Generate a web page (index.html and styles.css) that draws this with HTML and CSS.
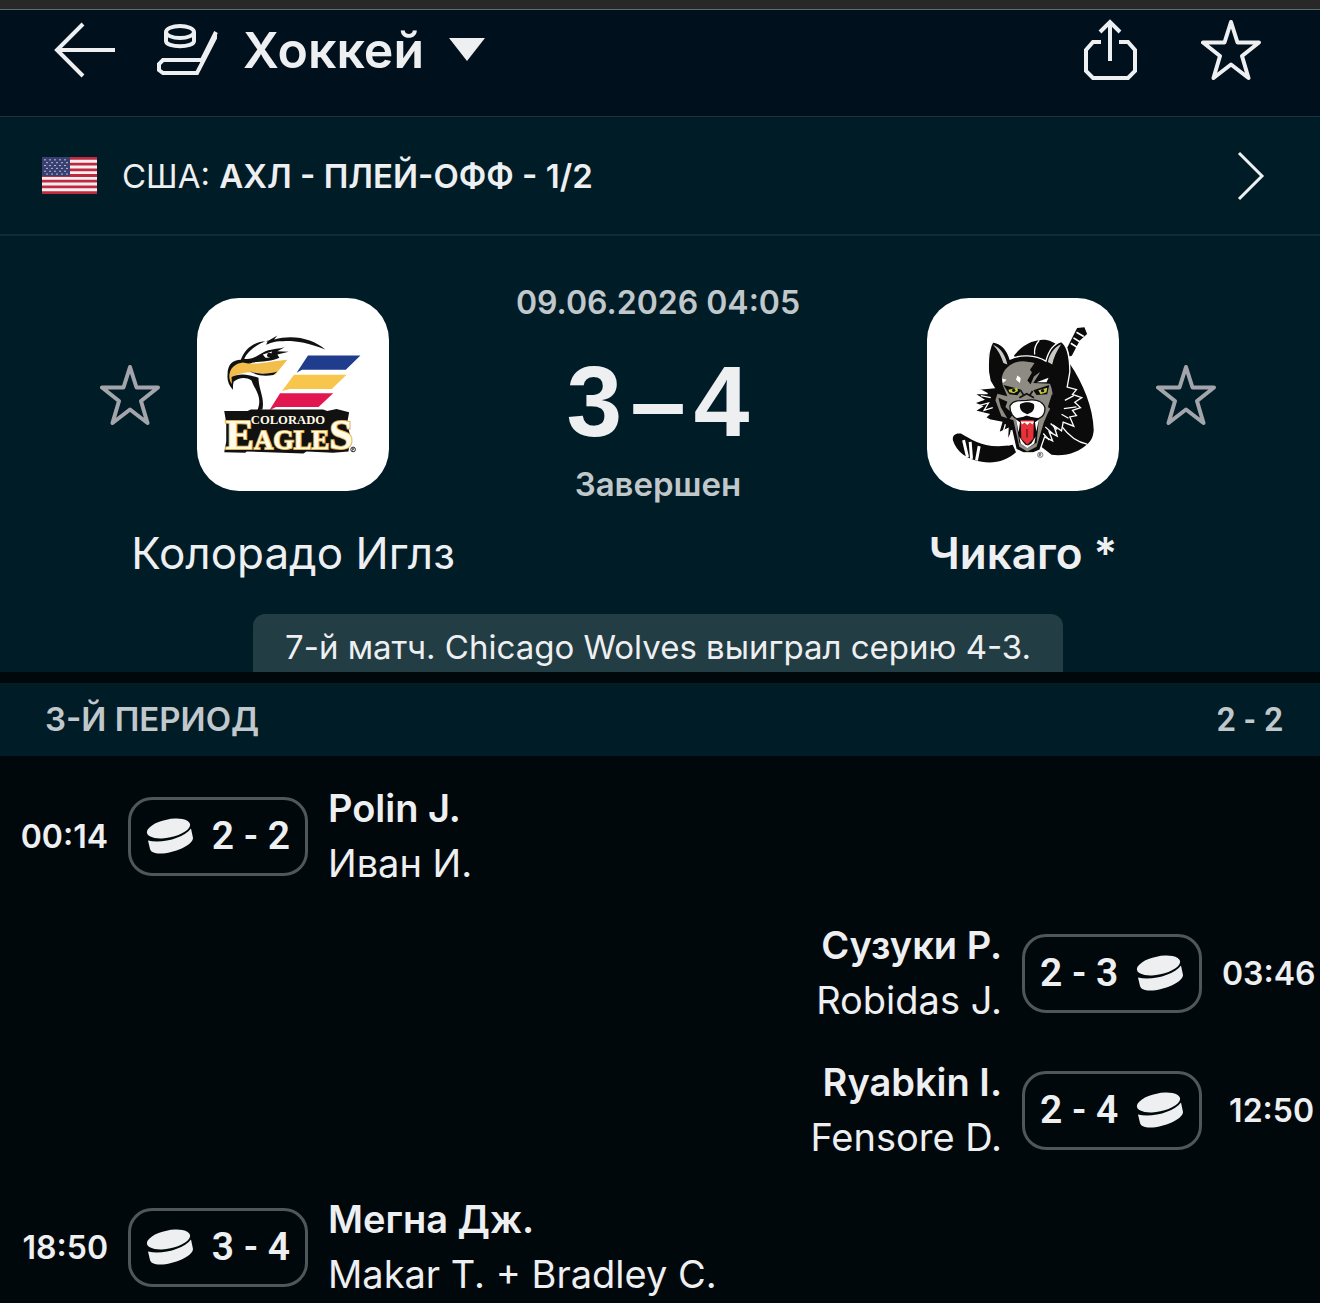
FILE: index.html
```
<!DOCTYPE html>
<html lang="ru">
<head>
    <meta charset="UTF-8">
    <meta name="viewport" content="width=device-width, initial-scale=1.0">
    <title>Колорадо Иглз - Чикаго</title>
    <link rel="stylesheet" href="styles.css">
</head>
<body>

<!-- shared icons -->
<svg class="sprite" aria-hidden="true">
    <symbol id="star" viewBox="0 0 60 62">
        <path d="M30 3 L36.500 23.500 H58 L41 37 L47.500 59 L30 45.500 L12.500 59 L19 37 L2 23.500 H23.500 Z" fill="none" stroke="currentColor" stroke-width="4" stroke-linejoin="round"/>
    </symbol>
    <symbol id="puck" viewBox="0 0 48 36">
        <ellipse cx="22.500" cy="10.500" rx="22" ry="9" transform="rotate(-12 22.500 10.500)" fill="currentColor"/>
        <path d="M2 22.500 C16 26 38 20 45 10.500 L47 20 C47 28 22 38 9 35 C6 34 4.500 33 4 31 Z" fill="currentColor"/>
    </symbol>
</svg>

<div class="status-strip"></div>

<header class="topbar">
    <button class="icon-btn back" aria-label="Назад">
        <svg width="62" height="56" viewBox="0 0 62 56"><path d="M29 2 L3 28 L29 54 M3 28 H61" fill="none" stroke="currentColor" stroke-width="4"/></svg>
    </button>
    <button class="sport">
        <svg width="62" height="54" viewBox="0 0 62 54" fill="none" stroke="currentColor" stroke-width="4">
            <ellipse cx="24" cy="9" rx="14" ry="6"/>
            <path d="M10 9 V18 C10 25 38 25 38 18 V9"/>
            <path d="M46 37 H7 L3 41 V47 L7 50 H41 L59 15 V10"/>
            <path d="M46 37 L60 9"/>
        </svg>
        <span>Хоккей</span>
        <svg width="36" height="23" viewBox="0 0 36 23"><path d="M0 0 H36 L18 23 Z" fill="currentColor"/></svg>
    </button>
    <div class="actions">
        <button class="icon-btn" aria-label="Поделиться">
            <svg width="54" height="62" viewBox="0 0 54 62" fill="none" stroke="currentColor" stroke-width="4"><path d="M18 23 H10 L3 31 V52 L10 59 H45 L52 52 V31 L45 23 H36 M27 42 V3 M17 13 L27 3 L37 13"/></svg>
        </button>
        <button class="icon-btn" aria-label="В избранное">
            <svg width="60" height="62"><use href="#star"/></svg>
        </button>
    </div>
</header>

<a class="league" href="#">
    <svg class="flag" width="55" height="37" viewBox="0 0 55 39" preserveAspectRatio="none">
        <rect width="55" height="39" fill="#f4f0f2"/>
        <path d="M0 1.500H55M0 7.500H55M0 13.500H55M0 19.500H55M0 25.500H55M0 31.500H55M0 37.500H55" stroke="#bf2a41" stroke-width="3"/>
        <rect width="28" height="20" fill="#39406f"/>
        <path d="M2 3H27M4 6H27M2 9H27M4 12H27M2 15H27M4 18H27" stroke="#b9bfd8" stroke-width="1" stroke-dasharray="2 3"/>
    </svg>
    <span class="league-name">США: <b>АХЛ - ПЛЕЙ-ОФФ - 1/2</b></span>
    <svg width="28" height="50" viewBox="0 0 28 50"><path d="M2 2 L25 25 L2 48" fill="none" stroke="currentColor" stroke-width="3"/></svg>
</a>

<main>
    <section class="match">
        <div class="team home">
            <button class="icon-btn fav" aria-label="Колорадо Иглз в избранное">
                <svg width="60" height="62"><use href="#star"/></svg>
            </button>
            <div class="logo">
                <svg viewBox="20 22 578 582">
                    <!-- head -->
                    <path d="M112 252 C112 222 128 208 152 208 C165 170 200 150 232 152 L262 135 L252 147 C310 130 370 145 406 177 C350 155 310 150 280 152 C255 151 238 158 228 163 L234 150 C205 158 175 178 162 205 C190 210 208 190 226 182 C250 174 268 175 284 170 L262 182 L296 184 L262 192 L268 202 C250 212 205 214 188 216 L130 240 L128 298 C116 285 110 270 112 252 Z" fill="#111"/>
                    <path d="M118 250 C122 228 140 218 158 216 C200 226 240 212 292 208 L256 252 C215 255 180 232 130 258 L126 282 C118 272 116 260 118 250 Z" fill="#f3bd4b"/>
                    <path d="M178 242 C205 254 240 250 262 243 L250 254 C220 260 195 254 178 242 Z M124 260 C145 248 172 250 205 262 C206 300 224 320 217 358 L202 360 C218 320 195 300 184 270 C165 258 145 262 130 274 L126 298 Z" fill="#111"/>
                    <path d="M218 192 L246 183 L238 202 L226 202 Z" fill="#fff"/>
                    <circle cx="238" cy="194" r="7" fill="#111"/>
                    <!-- wing stripes -->
                    <path d="M354 195 H512 L468 238 H336 L320 247 Z" fill="#203c8c"/>
                    <path d="M312 253 H470 L426 296 H300 L276 302 Z" fill="#f8c64c"/>
                    <path d="M270 309 H430 L386 350 H258 L238 360 Z" fill="#e3174f"/>
                    <!-- wordmark -->
                    <path d="M102 362 H172 L182 358 H400 L412 362 L440 356 L478 366 L472 400 L482 440 L476 484 L430 488 L350 484 L340 490 L170 484 L165 488 L102 486 L108 455 V398 Z" fill="#111"/>
                    <g class="wordmark">
                        <text x="105" y="476" font-size="80"><tspan font-size="130">E</tspan><tspan>AGLE</tspan><tspan font-size="130">S</tspan></text>
                        <text class="wordmark-top" x="182" y="400" font-size="38">COLORADO</text>
                    </g>
                    <circle cx="490" cy="478" r="7" fill="none" stroke="#222" stroke-width="3"/>
                    <path d="M488 482 V475 H492 V478 H488" fill="none" stroke="#222" stroke-width="2"/>
                </svg>
            </div>
            <h2 class="team-name">Колорадо Иглз</h2>
        </div>

        <div class="result">
            <time class="date" datetime="2026-06-09T04:05">09.06.2026 04:05</time>
            <div class="score"><span>3</span><span class="dash">–</span><span>4</span></div>
            <div class="status">Завершен</div>
        </div>

        <div class="team away winner">
            <div class="logo">
                <svg viewBox="20 22 578 582">
                    <!-- W shape and stick -->
                    <path d="M282 195 C305 168 325 155 352 150 C375 143 400 150 420 170 L450 220 C490 280 520 350 522 420 C520 440 515 452 502 462 C480 484 440 500 395 494 L362 468 L370 400 Z" fill="#0b0b0b"/>
                    <path d="M344 192 C342 174 348 160 358 149 M425 408 C445 435 470 456 502 462" fill="none" stroke="#fff" stroke-width="4"/>
                    <path d="M448 198 L442 172 L472 112 L494 110 L502 130 L480 150 L456 196 Z" fill="#0b0b0b"/>
                    <path d="M470 125 L492 138 M461 142 L482 155 M453 158 L473 171" stroke="#fff" stroke-width="5"/>
                    <path d="M98 450 C96 434 106 428 122 430 C155 448 195 480 278 464 L288 486 C262 510 225 522 185 515 C140 508 108 484 98 450 Z" fill="#0b0b0b"/>
                    <path d="M130 450 L142 501 M150 455 L154 506 M177 468 L169 511" stroke="#fff" stroke-width="9"/>
                    <!-- fur -->
                    <path d="M205 245 C203 205 205 175 218 154 C245 158 262 180 270 206 C300 192 345 192 378 212 C386 180 400 160 424 153 C442 165 450 190 450 245 L442 290 L470 298 L458 312 L486 322 L465 336 L482 352 L458 360 L470 376 L450 380 L462 408 L430 396 L425 422 L402 406 L412 438 L388 425 L398 452 L374 440 L360 480 L340 488 H310 L288 478 L276 424 L262 452 L264 415 L236 428 L245 396 L212 390 L196 382 L206 372 L164 362 L186 348 L162 338 L190 328 L162 310 L202 310 L176 296 L222 292 L210 272 Z" fill="#0b0b0b" stroke="#fff" stroke-width="4"/>
                    <path d="M218 162 C245 174 256 196 262 222 L250 218 C244 198 234 178 218 162 Z M424 161 C402 170 388 192 384 215 L397 222 C401 202 410 182 424 161 Z" fill="#c9c9c5"/>
                    <path d="M178 345 L205 338 L192 360 L218 352 M182 316 L212 322 M238 400 L230 420 M256 402 L248 430 M462 316 L435 330 M470 350 L432 355 M446 384 L425 372 M412 418 L392 400 M274 420 L266 466 M398 430 L376 410 M388 450 L370 430" fill="none" stroke="#fff" stroke-width="4"/>
                    <!-- face -->
                    <path d="M245 262 C252 225 292 205 326 215 C354 215 364 234 358 250 L340 278 L390 280 C402 306 402 342 385 366 L372 396 L350 470 L322 484 L298 470 L280 390 L244 378 L226 330 L232 310 L262 318 L248 285 Z" fill="#8d8b82"/>
                    <path d="M345 216 L366 225 L360 245 L342 258 L332 282 L322 270 L336 246 L330 238 Z M250 284 L304 298 L292 315 L268 312 Z M340 300 L388 284 L382 312 L350 314 Z M235 322 L262 334 L256 350 L280 372 L265 390 L242 350 Z M396 312 L384 350 L402 364 L408 320 Z" fill="#0b0b0b"/>
                    <path d="M292 255 L302 263 L300 278 L288 268 Z M246 264 L260 268 L248 278 Z M350 276 L386 262 L380 276 Z" fill="#fff"/>
                    <path d="M265 298 L292 292 L294 302 L282 309 L268 306 Z M355 300 L382 292 L380 306 L362 312 Z" fill="#c4c83c"/>
                    <circle cx="281" cy="300" r="5" fill="#111"/><circle cx="368" cy="301" r="5" fill="#111"/>
                    <path d="M298 322 L320 310 L342 322 M302 300 L312 316 M338 302 L330 314" fill="none" stroke="#111" stroke-width="5"/>
                    <!-- muzzle -->
                    <path d="M270 346 C280 330 300 330 320 330 C345 326 368 332 375 352 C376 376 362 388 342 386 L320 378 L298 388 C280 386 268 366 270 346 Z" fill="#fff" stroke="#111" stroke-width="4"/>
                    <path d="M300 342 C315 334 330 334 342 342 C346 358 336 368 322 372 C308 368 297 358 300 342 Z" fill="#0b0b0b"/>
                    <path d="M288 384 L320 378 L357 384 L350 458 L322 474 L298 458 Z" fill="#0b0b0b"/>
                    <path d="M302 390 H342 L340 446 L322 464 L304 446 Z" fill="#e8323a"/>
                    <path d="M321 416 V442" stroke="#7c1018" stroke-width="4"/>
                    <path d="M288 388 L300 396 L296 426 Z M357 388 L345 396 L349 424 Z M302 460 L298 440 L308 454 L316 464 L324 466 L334 460 L347 440 L343 460 L322 474 Z M302 394 H342 L338 403 L330 397 L322 404 L314 397 L306 403 Z" fill="#fff"/>
                    <circle cx="361" cy="494" r="8" fill="none" stroke="#444" stroke-width="2"/>
                    <path d="M358 499 V490 H363 V494 H358 L364 499" fill="none" stroke="#444" stroke-width="2"/>
                </svg>
            </div>
            <button class="icon-btn fav" aria-label="Чикаго в избранное">
                <svg width="60" height="62"><use href="#star"/></svg>
            </button>
            <h2 class="team-name">Чикаго *</h2>
        </div>

        <p class="note">7-й матч. Chicago Wolves выиграл серию 4-3.</p>
    </section>

    <section class="period">
        <h3 class="period-head"><span>3-Й ПЕРИОД</span><span class="period-score">2 - 2</span></h3>

        <div class="events">
            <div class="event">
                <time>00:14</time>
                <div class="badge"><svg width="48" height="36"><use href="#puck"/></svg><span>2 - 2</span></div>
                <div class="players"><b>Polin J.</b><span>Иван И.</span></div>
            </div>
            <div class="event right">
                <time>03:46</time>
                <div class="badge"><svg width="48" height="36"><use href="#puck"/></svg><span>2 - 3</span></div>
                <div class="players"><b>Сузуки Р.</b><span>Robidas J.</span></div>
            </div>
            <div class="event right">
                <time>12:50</time>
                <div class="badge"><svg width="48" height="36"><use href="#puck"/></svg><span>2 - 4</span></div>
                <div class="players"><b>Ryabkin I.</b><span>Fensore D.</span></div>
            </div>
            <div class="event">
                <time>18:50</time>
                <div class="badge"><svg width="48" height="36"><use href="#puck"/></svg><span>3 - 4</span></div>
                <div class="players"><b>Мегна Дж.</b><span>Makar T. + Bradley C.</span></div>
            </div>
        </div>
    </section>
</main>

</body>
</html>
```
FILE: styles.css
```
* {
    box-sizing: border-box;
}

body {
    margin: 0;
    background: #00080c;
    color: #eeeff1;
    font-family: Inter, "Noto Sans", sans-serif;
}

svg {
    display: block;
    flex-shrink: 0;
}

button {
    padding: 0;
    border: 0;
    background: none;
    color: inherit;
    font: inherit;
}

h2, h3, p {
    margin: 0;
}

.sprite {
    position: absolute;
    width: 0;
    height: 0;
}

.status-strip {
    height: 10px;
    background: #282828;
    border-bottom: 1px solid #5c7069;
}

/* top bar */
.topbar {
    display: flex;
    align-items: center;
    height: 107px;
    padding: 0 59px 27px 54px;
    background: #00101c;
    border-bottom: 1px solid #1c343d;
}

.sport {
    display: flex;
    align-items: center;
    gap: 25px;
    margin-left: 40px;
    font-size: 50px;
    font-weight: 600;
    line-height: 60px;
}

.actions {
    display: flex;
    gap: 64px;
    margin-left: auto;
}

/* league row */
.league {
    display: flex;
    align-items: center;
    height: 119px;
    padding: 0 55px 0 42px;
    background: #001c26;
    border-bottom: 2px solid #122c37;
    color: inherit;
    text-decoration: none;
}

.league-name {
    flex: 1;
    margin-left: 25px;
    font-size: 33px;
}

.league-name b {
    font-weight: 600;
}

/* match */
.match {
    display: grid;
    grid-template-columns: 386px 1fr 386px;
    padding: 62px 104px 0 100px;
    background: #001c26;
}

.team {
    display: grid;
    grid-template-columns: 1fr 192px 1fr;
    align-items: center;
    row-gap: 36px;
    justify-items: start;
}

.logo {
    grid-column: 2;
    width: 192px;
    height: 193px;
    border-radius: 42px;
    background: #fff;
    overflow: hidden;
}

.fav {
    color: #a3a5ab;
}

.away .fav {
    justify-self: end;
}

.wordmark {
    font-family: "Liberation Serif", serif;
    font-weight: bold;
    fill: #fffbe8;
    stroke: #e0b04c;
    stroke-width: 6;
    paint-order: stroke;
}

.wordmark-top {
    stroke: #111;
}

.team-name {
    grid-column: 1 / -1;
    justify-self: center;
    font-size: 44px;
    font-weight: 400;
    line-height: 52px;
    white-space: nowrap;
}

.winner .team-name {
    font-weight: 600;
}

.result {
    display: flex;
    flex-direction: column;
    align-items: center;
    font-size: 32px;
    font-weight: 600;
    color: #c0c8cc;
    white-space: nowrap;
}

.date,
.status {
    margin-top: -15px;
    line-height: 40px;
}

.status {
    font-size: 33px;
}

.score {
    display: flex;
    gap: 8px;
    font-family: "Liberation Sans", sans-serif;
    font-size: 100px;
    font-weight: 700;
    line-height: 156px;
    color: #eeeff1;
}

.note {
    grid-column: 1 / -1;
    justify-self: center;
    margin-top: 35px;
    padding: 12px 32px 4px;
    border-radius: 12px 12px 0 0;
    background: #233d44;
    font-size: 33px;
    line-height: 42px;
}

/* period */
.period-head {
    display: flex;
    justify-content: space-between;
    margin-top: 11px;
    padding: 0 37px 0 45px;
    background: #001c26;
    color: #c0c8cc;
    font-size: 33px;
    font-weight: 600;
    line-height: 73px;
}

.period-score {
    font-family: Roboto, sans-serif;
}

.events {
    display: flex;
    flex-direction: column;
    gap: 27px;
    padding-top: 25px;
}

.event {
    display: flex;
    align-items: center;
    gap: 20px;
    padding: 0 6px 0 16px;
}

.event.right {
    flex-direction: row-reverse;
}

.event time {
    width: 92px;
    font-size: 32px;
    font-weight: 600;
    text-align: right;
}

.badge {
    display: flex;
    align-items: center;
    justify-content: space-between;
    width: 180px;
    height: 79px;
    padding: 0 15px;
    border: 3px solid #515759;
    border-radius: 24px;
    font-family: Roboto, sans-serif;
    font-size: 39px;
    font-weight: 600;
}

.right .badge {
    flex-direction: row-reverse;
}

.players {
    display: flex;
    flex-direction: column;
    font-size: 38px;
    line-height: 55px;
}

.players b {
    font-weight: 600;
}

.right .players {
    align-items: flex-end;
}
```
